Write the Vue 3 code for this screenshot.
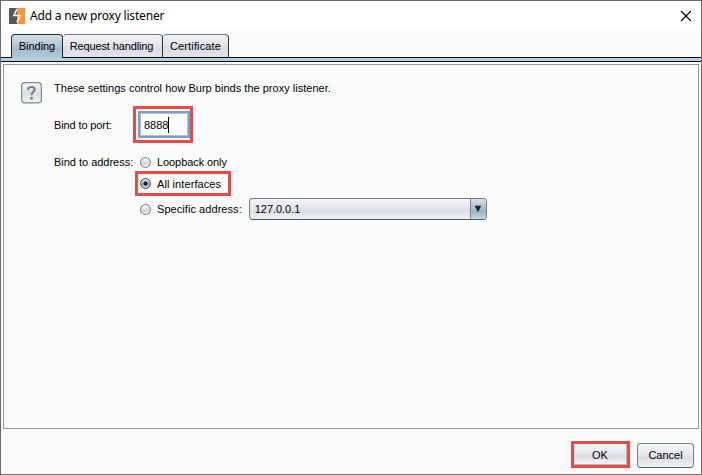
<script setup>
import { ref } from 'vue'

const tabs = ['Binding', 'Request handling', 'Certificate']
const activeTab = ref('Binding')
const port = ref('8888')
const mode = ref('all')
const address = ref('127.0.0.1')
</script>

<template>
  <div class="dialog">
    <header class="titlebar">
      <svg class="logo" width="16" height="16" viewBox="0 0 16 16">
        <rect width="8" height="16" fill="#58585a" />
        <rect x="8" width="8" height="16" fill="#f9963a" />
        <path d="M7.9 1L4.9 7.6H11.2L7.9 14.6" fill="none" stroke="#fff" stroke-width="1.5" stroke-linejoin="miter" />
      </svg>
      <h1 class="title">Add a new proxy listener</h1>
      <svg class="close" width="12" height="12" viewBox="0 0 12 12">
        <path d="M1 1L11 11M11 1L1 11" stroke="#000" stroke-width="1.1" />
      </svg>
    </header>

    <nav class="tabs">
      <button
        v-for="(tab, i) in tabs"
        :key="tab"
        :class="['tab', 'tab-' + i, { active: tab === activeTab }]"
        @click="activeTab = tab"
      >{{ tab }}</button>
    </nav>
    <div class="tabline"></div>

    <main class="panel">
      <div class="help">
        <svg width="21" height="22" viewBox="0 0 21 22">
          <defs>
            <linearGradient id="helpFill" x1="0" y1="0" x2="0" y2="1">
              <stop offset="0" stop-color="#f6f6f8" />
              <stop offset=".55" stop-color="#dcdee3" />
              <stop offset="1" stop-color="#f3f4f6" />
            </linearGradient>
          </defs>
          <rect x=".6" y=".6" width="19.8" height="20.3" rx="3.5" fill="url(#helpFill)" stroke="#82858b" stroke-width="1.2" />
          <path d="M7.2 8.2V6.2C8.6 4.6 13.6 4.2 13.6 7.4C13.6 10 10.5 9.8 10.5 13.2" fill="none" stroke="#828388" stroke-width="2.2" />
          <circle cx="10.5" cy="16.3" r="1.5" fill="#828388" />
        </svg>
      </div>
      <div class="form">
        <p class="intro">These settings control how Burp binds the proxy listener.</p>
        <div class="row port-row">
          <span class="label port-label">Bind to port:</span>
          <div class="mark port-mark">
            <div class="field"><span class="port-text">{{ port }}</span><i class="caret"></i></div>
          </div>
        </div>
        <div class="row address-row">
          <span class="label address-label">Bind to address:</span>
          <div class="options">
            <div class="option" @click="mode = 'loopback'">
              <i :class="['radio', { on: mode === 'loopback' }]"></i><span class="t-loop">Loopback only</span>
            </div>
            <div class="option mark all-mark" @click="mode = 'all'">
              <i :class="['radio', { on: mode === 'all' }]"></i><span class="t-all">All interfaces</span>
            </div>
            <div class="option specific" @click="mode = 'specific'">
              <i :class="['radio', { on: mode === 'specific' }]"></i><span class="t-spec">Specific address:</span>
              <div class="combo">
                <span class="combo-value">{{ address }}</span>
                <span class="combo-arrow">
                  <svg width="8" height="8" viewBox="0 0 8 8"><path d="M.7 .8H7.3L4 7.2Z" fill="#1c1f24" /></svg>
                </span>
              </div>
            </div>
          </div>
        </div>
      </div>
    </main>

    <footer class="actions">
      <div class="mark ok-mark"><button class="btn ok">OK</button></div>
      <button class="btn cancel">Cancel</button>
    </footer>
  </div>
</template>

<style>
body { margin: 0; background: #fbfbfb; }
</style>

<style scoped>
.dialog {
  box-sizing: border-box;
  width: 702px;
  height: 475px;
  border: 1px solid #6d6d6d;
  background: #fbfbfb;
  color: #000;
  font: 11px/14px "Liberation Sans", Arial, sans-serif;
  display: flex;
  flex-direction: column;
  overflow: hidden;
  white-space: nowrap;
}
button { font: inherit; color: inherit; padding: 0; margin: 0; box-sizing: border-box; }
.titlebar {
  height: 30px;
  flex: none;
  display: flex;
  align-items: center;
  background: #fff;
  padding: 0 9px 0 8px;
}
.title {
  margin: 0 auto 0 5px;
  font: 12px/16px "Noto Sans", sans-serif;
  letter-spacing: -0.19px;
}
.tabs {
  height: 26px;
  flex: none;
  display: flex;
  align-items: flex-end;
  padding-left: 10px;
}
.tab {
  height: 23px;
  border: 1px solid #6f737b;
  border-left-width: 0;
  border-right-color: #30333c;
  border-bottom: 0;
  border-radius: 4px 4px 0 0;
  background: linear-gradient(#f3f3f5, #e4e5ea 45%, #dadce2 60%, #e2e4e9);
}
.tab-0 { width: 52px; border-left-width: 1px; letter-spacing: -0.05px; }
.tab-1 { width: 100px; letter-spacing: -0.13px; padding-right: 2px; }
.tab-2 { width: 66px; letter-spacing: 0.14px; }
.tab.active {
  height: 24px;
  margin-bottom: -1px;
  padding-bottom: 2px;
  border-color: #1f2c3c;
  background: linear-gradient(#d3dde6, #b4c5d4 45%, #a5b9ca 60%, #b3cadb);
  z-index: 1;
}
.tabline {
  box-sizing: border-box;
  height: 5px;
  flex: none;
  background: #b5cfe0;
  border: solid #05070d;
  border-width: 1px 0;
}
.panel {
  box-sizing: border-box;
  width: 696px;
  height: 365px;
  flex: none;
  margin: 2px 0 0 2px;
  border: 1px solid #9297a1;
  display: flex;
  padding: 17px 0 0 17px;
}
.help { width: 33px; height: 22px; }
.intro { margin: -1px 0 11px; height: 14px; letter-spacing: 0.02px; }
.row { display: flex; }
.port-row { height: 37px; align-items: center; }
.label { flex: none; }
.port-label { width: 79px; letter-spacing: -0.12px; }
.mark { box-sizing: border-box; border: 3px solid #ea4a45; }
.port-mark { width: 60px; height: 37px; padding: 2px 0 0 2px; }
.field {
  box-sizing: border-box;
  width: 52px;
  height: 27px;
  border: 2px solid #76a3cd;
  box-shadow: inset 0 0 0 1px #b8bcc6;
  background: #fff;
  display: flex;
  align-items: center;
  padding-left: 4px;
}
.caret { width: 1px; height: 16px; background: #000; }
.address-row { padding-top: 12px; align-items: flex-start; }
.address-label { width: 81px; letter-spacing: -0.02px; }
.options { display: flex; flex-direction: column; }
.option { display: flex; align-items: center; height: 14px; padding-left: 5px; }
.all-mark { width: 96px; height: 25px; margin-top: 2px; padding-left: 2px; }
.t-loop { letter-spacing: -0.08px; }
.t-all { letter-spacing: 0.08px; }
.t-spec { letter-spacing: 0.06px; }
.specific { height: 22px; margin-top: 2px; }
.radio {
  box-sizing: border-box;
  flex: none;
  width: 11px;
  height: 11px;
  border: 1px solid #787c84;
  border-radius: 50%;
  margin-right: 6px;
  background: linear-gradient(#f5f5f7, #d5d7dd 60%, #eff0f3);
}
.radio.on {
  border-color: #3c4c5c;
  background: radial-gradient(circle, #15191f 0 1.6px, transparent 2.4px), linear-gradient(#dce6ee, #93abc0 60%, #c5dae8);
}
.combo {
  box-sizing: border-box;
  width: 238px;
  height: 22px;
  margin-left: 7px;
  border: 1px solid #777b84;
  border-bottom-color: #555a62;
  border-radius: 4px;
  background: linear-gradient(#f6f6f8, #e5e6eb 45%, #dadce2 60%, #f2f3f6);
  display: flex;
  align-items: center;
  justify-content: space-between;
  overflow: hidden;
  padding-left: 5px;
}
.combo-value { letter-spacing: -0.05px; }
.combo-arrow {
  width: 16px;
  height: 20px;
  box-sizing: border-box;
  border-left: 1px solid #708396;
  background: linear-gradient(#d5e0e8, #adc0d0 45%, #9cb2c5 60%, #c0d9e8);
  display: flex;
  align-items: center;
  justify-content: center;
}
.actions {
  display: flex;
  justify-content: flex-end;
  align-items: flex-start;
  padding: 12px 7px 0 0;
}
.ok-mark { width: 59px; height: 27px; margin-right: 7px; }
.btn {
  height: 25px;
  border: 1px solid #7b7f87;
  border-bottom-color: #565b63;
  border-radius: 4px;
  background: linear-gradient(#f7f7f9, #e6e7ec 45%, #dadce2 60%, #f2f3f5);
}
.ok {
  width: 53px;
  height: 21px;
  display: block;
  padding-top: 1px;
  border: 0 solid #b6b9c0;
  border-width: 0 1px 1px 0;
  border-radius: 1px;
}
.cancel { width: 57px; margin-top: 2px; padding-bottom: 2px; }
</style>
